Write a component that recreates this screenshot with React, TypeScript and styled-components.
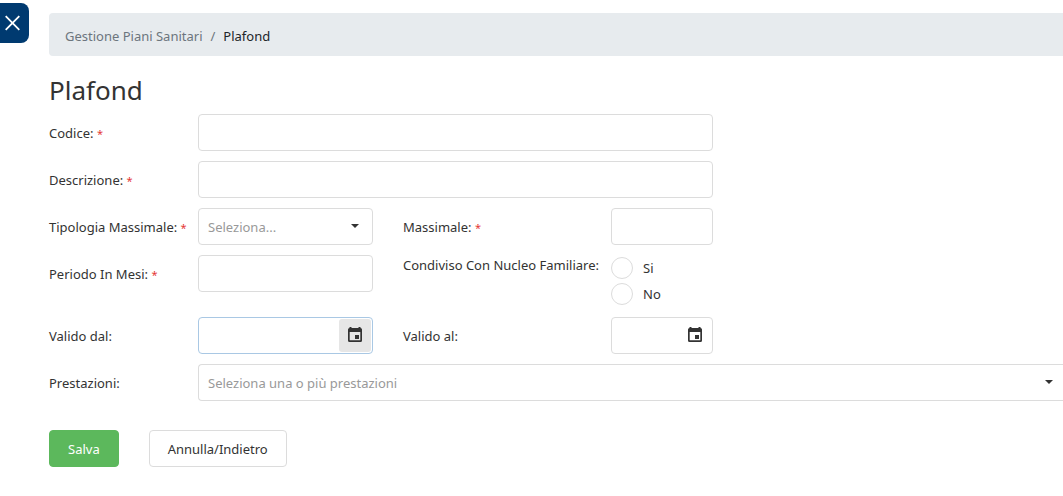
import React from "react";
import styled, { createGlobalStyle } from "styled-components";

const GlobalStyle = createGlobalStyle`
  *, *::before, *::after { box-sizing: border-box; }
  body {
    margin: 0;
    background: #fff;
    color: #333;
    font-family: "Noto Sans", "Open Sans", sans-serif;
    font-size: 13px;
    line-height: 20px;
    overflow-x: hidden;
  }
  input, select, button { font: inherit; color: inherit; }
`;

const Page = styled.div`
  display: flex;
  align-items: flex-start;
  padding: 3px 0 16px;
`;

const CloseButton = styled.button`
  display: flex;
  flex: none;
  align-items: center;
  justify-content: center;
  width: 29px;
  height: 40px;
  margin-right: 20px;
  padding: 0 4px 0 0;
  border: 0;
  border-radius: 0 8px 8px 0;
  background: #003a70;
  color: #fff;
  cursor: pointer;
`;

const Main = styled.main`
  flex: 1;
  min-width: 0;
  padding-top: 10px;
`;

const Breadcrumb = styled.nav`
  display: flex;
  align-items: center;
  gap: 8px;
  height: 43px;
  padding: 3px 16px 0;
  border-radius: 4px 0 0 4px;
  background: #e7ebee;
  color: #6c757d;
`;

const CrumbLink = styled.a`
  color: inherit;
  text-decoration: none;
`;

const Current = styled.span`
  color: #212529;
`;

const Title = styled.h1`
  margin: 19px 0 9px;
  font-size: 26px;
  font-weight: 400;
  line-height: 30px;
`;

const Form = styled.form`
  display: grid;
  grid-template-columns: 149px 175fr 238px 102fr 350fr;
  row-gap: 10px;
  align-items: start;
`;

const Label = styled.label<{ $second?: boolean }>`
  grid-column: ${(p) => (p.$second ? 3 : 1)};
  padding-top: 2px;
  padding-left: ${(p) => (p.$second ? 30 : 0)}px;
  line-height: 35px;
  white-space: nowrap;
`;

const GroupLabel = styled.span`
  grid-column: 3;
  padding-left: 30px;
  white-space: nowrap;
`;

const Required = styled.span`
  color: #e53935;
  font-size: 11px;
`;

const Box = styled.div<{ $column: string; $active?: boolean; $bleed?: boolean }>`
  position: relative;
  display: flex;
  grid-column: ${(p) => p.$column};
  min-width: 0;
  height: 37px;
  border: 1px solid ${(p) => (p.$active ? "#a9c8e4" : "#dcdcdc")};
  border-right-width: ${(p) => (p.$bleed ? 0 : 1)}px;
  border-radius: ${(p) => (p.$bleed ? "4px 0 0 4px" : "4px")};
  background: #fff;
`;

const Input = styled.input`
  flex: 1;
  width: 100%;
  min-width: 0;
  padding: 0 9px;
  border: 0;
  border-radius: 4px;
  background: transparent;
  outline: none;
`;

const Select = styled.select`
  flex: 1;
  width: 100%;
  min-width: 0;
  padding: 0 30px 0 9px;
  border: 0;
  background: transparent;
  color: #999;
  appearance: none;
  outline: none;
`;

const Arrow = styled.svg<{ $bleed?: boolean }>`
  position: absolute;
  top: 15px;
  right: ${(p) => (p.$bleed ? 10 : 13)}px;
  pointer-events: none;
`;

const CalendarButton = styled.button<{ $active?: boolean }>`
  display: flex;
  flex: none;
  align-items: center;
  justify-content: center;
  width: 32px;
  margin: 1px;
  padding: 0 0 2px;
  border: 0;
  border-radius: 3px;
  background: ${(p) => (p.$active ? "#e6e6e6" : "transparent")};
  cursor: pointer;
`;

const RadioGroup = styled.div`
  grid-column: 4;
`;

const RadioLabel = styled.label`
  display: flex;
  align-items: center;
  gap: 10px;
  height: 26px;
`;

const Radio = styled.input`
  width: 22px;
  height: 22px;
  margin: 0;
  border: 1px solid #dcdcdc;
  border-radius: 50%;
  background: #fff;
  appearance: none;
  &:checked { box-shadow: inset 0 0 0 5px #fff; background: #333; }
`;

const Actions = styled.div`
  display: flex;
  grid-column: 1 / -1;
  gap: 30px;
  margin-top: 19px;
`;

const Button = styled.button<{ $primary?: boolean }>`
  height: 37px;
  padding: 0 18px;
  border: 1px solid ${(p) => (p.$primary ? "#5cb85c" : "#dcdcdc")};
  border-radius: 4px;
  background: ${(p) => (p.$primary ? "#5cb85c" : "#fff")};
  color: ${(p) => (p.$primary ? "#fff" : "#333")};
  cursor: pointer;
`;

const DropArrow = ({ bleed }: { bleed?: boolean }) => (
  <Arrow $bleed={bleed} width="8" height="4" viewBox="0 0 8 4" aria-hidden="true">
    <path d="M0 0h8L4 4z" fill="#333" />
  </Arrow>
);

const CalendarIcon = () => (
  <svg width="14" height="16" viewBox="0 0 14 16" aria-hidden="true">
    <path
      fill="#333"
      fillRule="evenodd"
      d="M1.500 0h2v1h7V0h2v1A1.500 1.500 0 0 1 14 2.500v11a1.500 1.500 0 0 1-1.500 1.500h-11A1.500 1.500 0 0 1 0 13.500v-11A1.500 1.500 0 0 1 1.500 1zM1.700 5v8.300h10.600V5zM7 8h4v4H7z"
    />
  </svg>
);

const DateField = ({ id, column, active }: { id: string; column: string; active?: boolean }) => (
  <Box $column={column} $active={active}>
    <Input id={id} type="text" />
    <CalendarButton type="button" $active={active} aria-label="Apri calendario">
      <CalendarIcon />
    </CalendarButton>
  </Box>
);

export default function App() {
  return (
    <>
      <GlobalStyle />
      <Page>
        <CloseButton type="button" aria-label="Chiudi menu">
          <svg width="15" height="16" viewBox="0 0 15 16" aria-hidden="true">
            <path d="M.7 1.200l13.600 13.600M14.300 1.200L.7 14.800" stroke="currentColor" strokeWidth="1.800" />
          </svg>
        </CloseButton>
        <Main>
          <Breadcrumb aria-label="Percorso">
            <CrumbLink href="#piani">Gestione Piani Sanitari</CrumbLink>
            <span>/</span>
            <Current>Plafond</Current>
          </Breadcrumb>
          <Title>Plafond</Title>
          <Form onSubmit={(e) => e.preventDefault()}>
            <Label htmlFor="codice">Codice: <Required>*</Required></Label>
            <Box $column="2 / 5"><Input id="codice" /></Box>

            <Label htmlFor="descrizione">Descrizione: <Required>*</Required></Label>
            <Box $column="2 / 5"><Input id="descrizione" /></Box>

            <Label htmlFor="tipologia">Tipologia Massimale: <Required>*</Required></Label>
            <Box $column="2">
              <Select id="tipologia"><option>Seleziona...</option></Select>
              <DropArrow />
            </Box>
            <Label htmlFor="massimale" $second>Massimale: <Required>*</Required></Label>
            <Box $column="4"><Input id="massimale" /></Box>

            <Label htmlFor="periodo">Periodo In Mesi: <Required>*</Required></Label>
            <Box $column="2"><Input id="periodo" /></Box>
            <GroupLabel id="condiviso">Condiviso Con Nucleo Familiare:</GroupLabel>
            <RadioGroup role="radiogroup" aria-labelledby="condiviso">
              <RadioLabel><Radio type="radio" name="condiviso" value="si" />Si</RadioLabel>
              <RadioLabel><Radio type="radio" name="condiviso" value="no" />No</RadioLabel>
            </RadioGroup>

            <Label htmlFor="dal">Valido dal:</Label>
            <DateField id="dal" column="2" active />
            <Label htmlFor="al" $second>Valido al:</Label>
            <DateField id="al" column="4" />

            <Label htmlFor="prestazioni">Prestazioni:</Label>
            <Box $column="2 / -1" $bleed>
              <Select id="prestazioni"><option>Seleziona una o più prestazioni</option></Select>
              <DropArrow bleed />
            </Box>

            <Actions>
              <Button type="submit" $primary>Salva</Button>
              <Button type="button">Annulla/Indietro</Button>
            </Actions>
          </Form>
        </Main>
      </Page>
    </>
  );
}
